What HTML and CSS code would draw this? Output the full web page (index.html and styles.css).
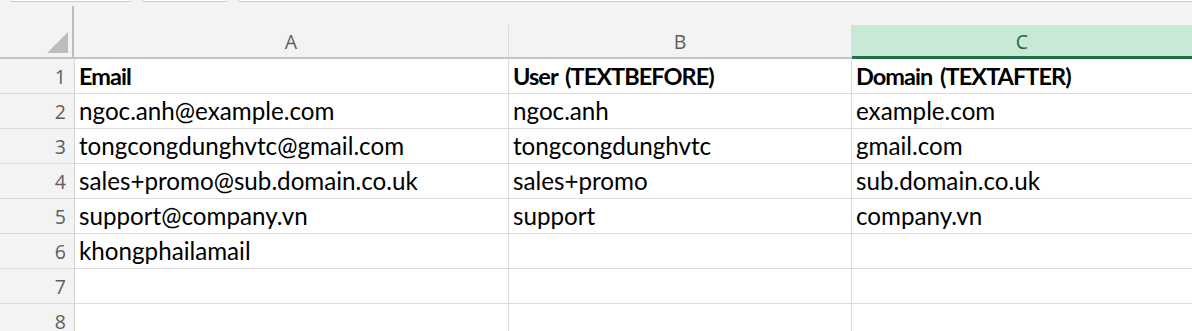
FILE: index.html
```html
<!DOCTYPE html>
<html>
<head>
<meta charset="utf-8">
<link rel="stylesheet" href="styles.css">
</head>
<body>
<div class="app">
  <div class="tabs">
    <span class="tab tab-1"></span>
    <span class="tab tab-2"></span>
    <span class="tab tab-3"></span>
  </div>
  <div class="col-headers">
    <div class="corner"><span class="corner-tri"></span></div>
    <div class="col-head col-a">A</div>
    <div class="col-head col-b">B</div>
    <div class="col-head col-c selected">C</div>
  </div>
  <div class="rows">
    <div class="row">
      <div class="row-head">1</div>
      <div class="cell col-a bold">Email</div>
      <div class="cell col-b bold">User (TEXTBEFORE)</div>
      <div class="cell col-c bold">Domain (TEXTAFTER)</div>
    </div>
    <div class="row">
      <div class="row-head">2</div>
      <div class="cell col-a">ngoc.anh@example.com</div>
      <div class="cell col-b">ngoc.anh</div>
      <div class="cell col-c">example.com</div>
    </div>
    <div class="row">
      <div class="row-head">3</div>
      <div class="cell col-a">tongcongdunghvtc@gmail.com</div>
      <div class="cell col-b">tongcongdunghvtc</div>
      <div class="cell col-c">gmail.com</div>
    </div>
    <div class="row">
      <div class="row-head">4</div>
      <div class="cell col-a">sales+promo@sub.domain.co.uk</div>
      <div class="cell col-b">sales+promo</div>
      <div class="cell col-c">sub.domain.co.uk</div>
    </div>
    <div class="row">
      <div class="row-head">5</div>
      <div class="cell col-a">support@company.vn</div>
      <div class="cell col-b">support</div>
      <div class="cell col-c">company.vn</div>
    </div>
    <div class="row">
      <div class="row-head">6</div>
      <div class="cell col-a">khongphailamail</div>
      <div class="cell col-b"></div>
      <div class="cell col-c"></div>
    </div>
    <div class="row">
      <div class="row-head">7</div>
      <div class="cell col-a"></div>
      <div class="cell col-b"></div>
      <div class="cell col-c"></div>
    </div>
    <div class="row">
      <div class="row-head">8</div>
      <div class="cell col-a"></div>
      <div class="cell col-b"></div>
      <div class="cell col-c"></div>
    </div>
  </div>
</div>
</body>
</html>
```

FILE: styles.css
```css
* { box-sizing: border-box; }

html, body {
  margin: 0;
  padding: 0;
  background: #ffffff;
  overflow: hidden;
}

.app {
  width: 1192px;
  height: 331px;
  overflow: hidden;
  background: #ffffff;
}

.tabs {
  height: 6px;
  background: #f3f3f3;
  display: flex;
  align-items: flex-start;
  padding-left: 10px;
  gap: 11px;
}

.tab {
  display: block;
  height: 2px;
  background: #ffffff;
  border: 1px solid #cbcbcb;
  border-top: none;
  border-radius: 0 0 3px 3px;
}
.tab-1 { width: 121px; }
.tab-2 { width: 85px; }
.tab-3 { flex: 1; border-right: none; border-radius: 0 0 0 3px; }

.col-headers {
  display: flex;
  height: 53px;
  background: #f3f3f3;
}

.corner {
  position: relative;
  width: 74px;
  height: 53px;
  border-right: 2px solid #bdbdbd;
  border-bottom: 2px solid #c4c4c4;
}

.corner-tri {
  position: absolute;
  right: 4px;
  bottom: 4px;
  width: 0;
  height: 0;
  border-left: 21px solid transparent;
  border-bottom: 21px solid #bdbdbd;
}

.col-head {
  margin-top: 19px;
  height: 34px;
  border-bottom: 2px solid #c4c4c4;
  border-right: 1px solid #dcdcdc;
  font-family: "Segoe UI", "Open Sans", sans-serif;
  font-size: 19.5px;
  line-height: 32px;
  padding-top: 1px;
  color: #5e5e5e;
  text-align: center;
}

.col-head.col-a { width: 435px; }
.col-head.col-b { width: 343px; }
.col-head.col-c { flex: 1; border-right: none; }

.col-head.selected {
  background: #c8e9d6;
  color: #1d6b40;
  border-bottom: 3px solid #1e7145;
  line-height: 31px;
}

.row {
  display: flex;
  height: 35px;
}

.row-head {
  width: 75px;
  height: 35px;
  background: #f3f3f3;
  border-right: 1px solid #d6d6d6;
  border-bottom: 1px solid #d9d9d9;
  font-family: "Segoe UI", "Open Sans", sans-serif;
  font-size: 19.5px;
  line-height: 34px;
  padding-top: 1px;
  padding-right: 8px;
  text-align: right;
  color: #5e5e5e;
}

.cell {
  height: 35px;
  border-right: 1px solid #dcdcdc;
  border-bottom: 1px solid #dcdcdc;
  font-family: Lato, "Open Sans", sans-serif;
  font-size: 24.2px;
  line-height: 34px;
  padding-left: 4px;
  color: #000000;
  white-space: nowrap;
  overflow: visible;
}

.cell.col-a { width: 434px; }
.cell.col-b { width: 343px; }
.cell.col-c { flex: 1; border-right: none; }

.bold {
  font-weight: 700;
  font-size: 23.5px;
  letter-spacing: -0.95px;
  word-spacing: 3px;
}
```
